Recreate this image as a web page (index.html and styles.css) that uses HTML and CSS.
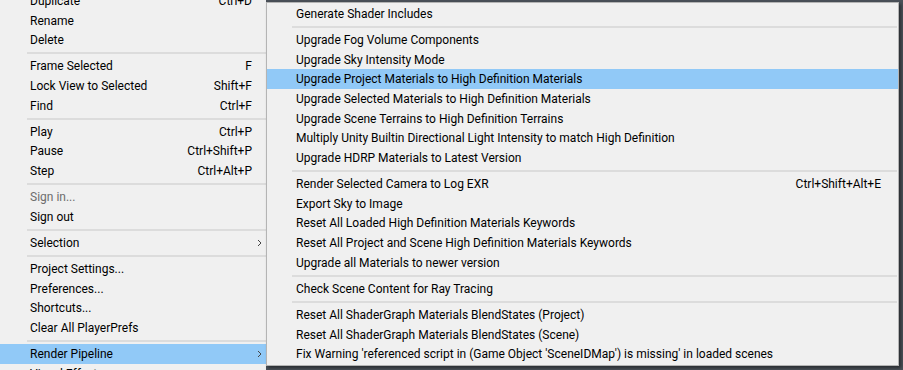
FILE: index.html
```html
<!DOCTYPE html>
<html lang="en">
<head>
    <meta charset="UTF-8">
    <meta name="viewport" content="width=device-width, initial-scale=1.0">
    <title>Edit Menu - Render Pipeline</title>
    <link rel="stylesheet" href="styles.css">
</head>
<body>
    <div class="menu parent">
        <div class="list">
            <div class="item"><span class="label">Duplicate</span><span class="key">Ctrl+D</span><span class="arrow"></span></div>
            <div class="item"><span class="label">Rename</span><span class="key"></span><span class="arrow"></span></div>
            <div class="item"><span class="label">Delete</span><span class="key"></span><span class="arrow"></span></div>
            <div class="sep"></div>
            <div class="item"><span class="label">Frame Selected</span><span class="key">F</span><span class="arrow"></span></div>
            <div class="item"><span class="label">Lock View to Selected</span><span class="key">Shift+F</span><span class="arrow"></span></div>
            <div class="item"><span class="label">Find</span><span class="key">Ctrl+F</span><span class="arrow"></span></div>
            <div class="sep"></div>
            <div class="item"><span class="label">Play</span><span class="key">Ctrl+P</span><span class="arrow"></span></div>
            <div class="item"><span class="label">Pause</span><span class="key">Ctrl+Shift+P</span><span class="arrow"></span></div>
            <div class="item"><span class="label">Step</span><span class="key">Ctrl+Alt+P</span><span class="arrow"></span></div>
            <div class="sep"></div>
            <div class="item disabled"><span class="label">Sign in...</span><span class="key"></span><span class="arrow"></span></div>
            <div class="item"><span class="label">Sign out</span><span class="key"></span><span class="arrow"></span></div>
            <div class="sep"></div>
            <div class="item"><span class="label">Selection</span><span class="key"></span>
                <span class="arrow"><svg width="5" height="8" viewBox="0 0 5 8"><path d="M1 1l3 3-3 3" fill="none" stroke="#444" stroke-width="1"/></svg></span></div>
            <div class="sep"></div>
            <div class="item"><span class="label">Project Settings...</span><span class="key"></span><span class="arrow"></span></div>
            <div class="item"><span class="label">Preferences...</span><span class="key"></span><span class="arrow"></span></div>
            <div class="item"><span class="label">Shortcuts...</span><span class="key"></span><span class="arrow"></span></div>
            <div class="item"><span class="label">Clear All PlayerPrefs</span><span class="key"></span><span class="arrow"></span></div>
            <div class="sep"></div>
            <div class="item active"><span class="label">Render Pipeline</span><span class="key"></span>
                <span class="arrow"><svg width="5" height="8" viewBox="0 0 5 8"><path d="M1 1l3 3-3 3" fill="none" stroke="#444" stroke-width="1"/></svg></span></div>
            <div class="item"><span class="label">Visual Effects</span><span class="key"></span>
                <span class="arrow"><svg width="5" height="8" viewBox="0 0 5 8"><path d="M1 1l3 3-3 3" fill="none" stroke="#444" stroke-width="1"/></svg></span></div>
        </div>
    </div>

    <div class="menu submenu">
        <div class="item"><span class="label">Generate Shader Includes</span><span class="key"></span></div>
        <div class="sep"></div>
        <div class="item"><span class="label">Upgrade Fog Volume Components</span><span class="key"></span></div>
        <div class="item"><span class="label">Upgrade Sky Intensity Mode</span><span class="key"></span></div>
        <div class="item active"><span class="label">Upgrade Project Materials to High Definition Materials</span><span class="key"></span></div>
        <div class="item"><span class="label">Upgrade Selected Materials to High Definition Materials</span><span class="key"></span></div>
        <div class="item"><span class="label">Upgrade Scene Terrains to High Definition Terrains</span><span class="key"></span></div>
        <div class="item"><span class="label">Multiply Unity Builtin Directional Light Intensity to match High Definition</span><span class="key"></span></div>
        <div class="item"><span class="label">Upgrade HDRP Materials to Latest Version</span><span class="key"></span></div>
        <div class="sep"></div>
        <div class="item"><span class="label">Render Selected Camera to Log EXR</span><span class="key">Ctrl+Shift+Alt+E</span></div>
        <div class="item"><span class="label">Export Sky to Image</span><span class="key"></span></div>
        <div class="item"><span class="label">Reset All Loaded High Definition Materials Keywords</span><span class="key"></span></div>
        <div class="item"><span class="label">Reset All Project and Scene High Definition Materials Keywords</span><span class="key"></span></div>
        <div class="item"><span class="label">Upgrade all Materials to newer version</span><span class="key"></span></div>
        <div class="sep"></div>
        <div class="item"><span class="label">Check Scene Content for Ray Tracing</span><span class="key"></span></div>
        <div class="sep"></div>
        <div class="item"><span class="label">Reset All ShaderGraph Materials BlendStates (Project)</span><span class="key"></span></div>
        <div class="item"><span class="label">Reset All ShaderGraph Materials BlendStates (Scene)</span><span class="key"></span></div>
        <div class="item"><span class="label">Fix Warning 'referenced script in (Game Object 'SceneIDMap') is missing' in loaded scenes</span><span class="key"></span></div>
    </div>
</body>
</html>
```

FILE: styles.css
```css
body {
    margin: 0;
    padding: 0;
    height: 370px;
    overflow: hidden;
    background-color: #4a5058;
    font-family: Roboto, "Noto Sans", sans-serif;
    font-size: 12px;
    color: #000;
    display: flex;
    align-items: flex-start;
}

.menu {
    background-color: #f0f0f0;
}

.parent {
    width: 266px;
    height: 370px;
    overflow: hidden;
    flex-shrink: 0;
}

.parent .list {
    margin-top: -9px;
}

.item {
    height: 19.7px;
    display: flex;
    align-items: center;
    white-space: nowrap;
}

.parent .item {
    padding-left: 30px;
}

.item .label {
    flex: 1;
}

.parent .arrow {
    width: 14px;
    display: flex;
    justify-content: center;
    align-items: center;
}

.item.active {
    background-color: #91c9f7;
}

.item.disabled {
    color: #6d6d6d;
}

.sep {
    height: 2px;
    background-color: #dcdcdc;
    margin: 2.2px 0 2.2px 27px;
}

.submenu {
    width: 631px;
    margin-top: 2px;
    border: 1px solid #b4b4b4;
    padding: 1px 0;
    box-shadow: 2px 2px 3px rgba(0, 0, 0, 0.45);
}

.submenu .item {
    padding-left: 29px;
    padding-right: 17px;
}

.submenu .sep {
    margin-left: 25px;
    margin-right: 1px;
}
```
